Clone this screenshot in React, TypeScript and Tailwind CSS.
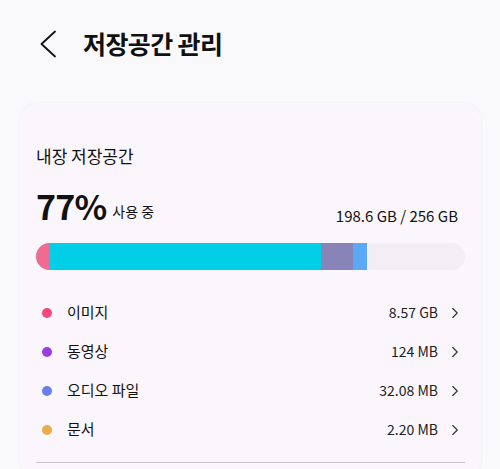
import { ChevronRight } from "lucide-react";

type Category = {
  label: string;
  size: string;
  dot: string;
};

const CATEGORIES: Category[] = [
  { label: "이미지", size: "8.57 GB", dot: "bg-[#f6477d]" },
  { label: "동영상", size: "124 MB", dot: "bg-[#9a3ddf]" },
  { label: "오디오 파일", size: "32.08 MB", dot: "bg-[#6a7ef0]" },
  { label: "문서", size: "2.20 MB", dot: "bg-[#e9ad4c]" },
];

function BackArrow() {
  return (
    <svg width="18" height="28" viewBox="0 0 18 28" fill="none" className="text-[#111]">
      <path d="M16 1.5 L2.5 14 L16 26.5" stroke="currentColor" strokeWidth="1.8" strokeLinecap="round" strokeLinejoin="round" />
    </svg>
  );
}

function UsageBar() {
  return (
    <div className="mx-4 mt-[20px] flex h-[27px] overflow-hidden rounded-full bg-[#f3eef4]">
      <div className="w-[14px] bg-[#f06b91]" />
      <div className="w-[271px] bg-[#00cfe7]" />
      <div className="w-[32px] bg-[#8984b8]" />
      <div className="w-[14px] bg-[#5ba9f6]" />
    </div>
  );
}

function CategoryRow({ label, size, dot }: Category) {
  return (
    <div className="flex h-[39px] items-center pl-[22px] pr-[17px]">
      <span className={`h-[10px] w-[10px] rounded-full ${dot}`} />
      <span className="ml-[15px] flex-1 text-[15px] text-[#111]">{label}</span>
      <span className="text-[14px] text-[#222]">{size}</span>
      <ChevronRight className="ml-[8px] h-[18px] w-[18px] text-[#333]" strokeWidth={1.5} />
    </div>
  );
}

export default function App() {
  return (
    <div
      className="h-[469px] w-[500px] overflow-hidden bg-[#f9f8fb]"
      style={{ fontFamily: '"Noto Sans CJK KR", "Noto Sans", sans-serif' }}
    >
      <header className="flex h-[88px] items-center pl-[39px]">
        <BackArrow />
        <h1 className="ml-[26px] text-[25px] font-bold tracking-tight text-[#111]">
          저장공간 관리
        </h1>
      </header>

      <section className="ml-[20px] mt-[15px] w-[461px] rounded-[18px] bg-[#fbf6fb] pb-4 shadow-[0_0_3px_rgba(0,0,0,0.06)]">
        <p className="px-4 pt-[42px] text-[17px] leading-[22px] text-[#111]">내장 저장공간</p>

        <div className="mt-[22px] flex items-end justify-between px-4">
          <div className="flex items-end">
            <span className="text-[34px] font-bold leading-[34px] tracking-tight text-[#111]">77%</span>
            <span className="mb-[1px] ml-[6px] text-[14px] text-[#111]">사용 중</span>
          </div>
          <span className="mb-[-3px] mr-[7px] text-[15px] leading-[20px] text-[#111]">198.6 GB / 256 GB</span>
        </div>

        <UsageBar />

        <div className="mt-[23px]">
          {CATEGORIES.map((c) => (
            <CategoryRow key={c.label} {...c} />
          ))}
        </div>

        <div className="mx-4 mt-[13px] h-px bg-[#c9c6cb]" />
      </section>
    </div>
  );
}
